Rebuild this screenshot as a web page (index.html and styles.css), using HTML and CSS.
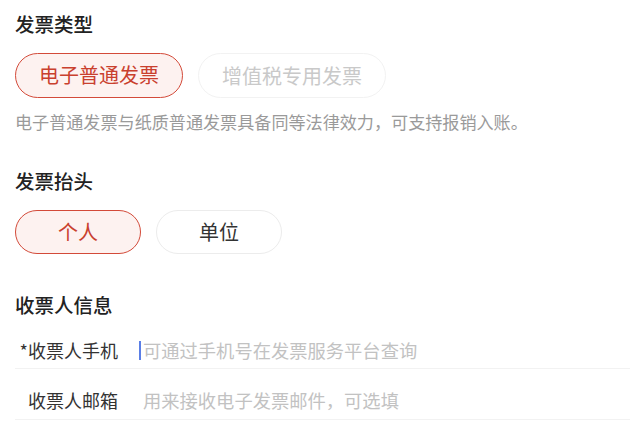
FILE: index.html
```html
<!DOCTYPE html>
<html lang="zh-CN">
<head>
<meta charset="utf-8">
<title>发票</title>
<link rel="stylesheet" href="styles.css">
</head>
<body>
<div class="page">
  <h2 class="title t1">发票类型</h2>
  <div class="chips">
    <span class="chip active">电子普通发票</span>
    <span class="chip disabled">增值税专用发票</span>
  </div>
  <p class="desc">电子普通发票与纸质普通发票具备同等法律效力，可支持报销入账。</p>

  <h2 class="title t2">发票抬头</h2>
  <div class="chips">
    <span class="chip wide active">个人</span>
    <span class="chip wide">单位</span>
  </div>

  <h2 class="title t3">收票人信息</h2>
  <div class="form">
    <div class="row">
      <span class="label">*收票人手机</span>
      <span class="field"><span class="caret"></span><span class="ph">可通过手机号在发票服务平台查询</span></span>
    </div>
    <div class="row">
      <span class="label">收票人邮箱</span>
      <span class="field"><span class="ph ph2">用来接收电子发票邮件，可选填</span></span>
    </div>
  </div>
</div>
</body>
</html>
```

FILE: styles.css
```css
* { box-sizing: border-box; }
html, body { margin: 0; padding: 0; background: #fff; }
body {
  font-family: "Noto Sans CJK SC", "Noto Sans", sans-serif;
  color: #222;
}
.page {
  padding-left: 15px;
  width: 630px;
  height: 425px;
  overflow: hidden;
}
.title {
  margin: 0;
  font-size: 19.5px;
  line-height: 28px;
  font-weight: 500;
  color: #222;
}
.t1 { padding-top: 10px; }
.t2 { margin-top: 33px; }
.t3 { margin-top: 37px; }
.chips {
  display: flex;
  gap: 15px;
  margin-top: 15px;
}
.chip {
  display: inline-block;
  height: 45px;
  line-height: 43px;
  padding: 0 23px;
  border: 1px solid #ececec;
  border-radius: 23px;
  font-size: 20px;
  color: #333;
  background: #fff;
  text-align: center;
}
.chip.active {
  border: 1.5px solid #d34a39;
  background: #fdf2f0;
  color: #c9402e;
  line-height: 42px;
}
.chip.disabled {
  color: #c9c9c9;
  border-color: #f2f2f2;
}
.chip.wide {
  width: 126px;
  height: 44px;
  line-height: 42px;
  padding: 0;
}
.chip.wide.active { line-height: 41px; }
.desc {
  margin: 12px 0 0;
  font-size: 17.1px;
  line-height: 24px;
  color: #9a9a9a;
  white-space: nowrap;
}
.form { margin-top: 0; }
.row {
  display: flex;
  align-items: center;
  padding: 18px 0 5px;
  border-bottom: 1px solid #f2f2f2;
}
.row + .row { padding-bottom: 6px; }
.label {
  width: 103px;
  text-align: right;
  font-size: 18px;
  line-height: 26px;
  color: #333;
  flex: none;
}
.field {
  display: flex;
  align-items: center;
  margin-left: 21px;
  font-size: 18.3px;
  line-height: 26px;
}
.caret {
  display: inline-block;
  width: 2px;
  height: 19px;
  background: #5b7fe6;
  margin-right: 2px;
}
.ph { color: #c2c2c2; }
.ph2 { margin-left: 4px; }
```
